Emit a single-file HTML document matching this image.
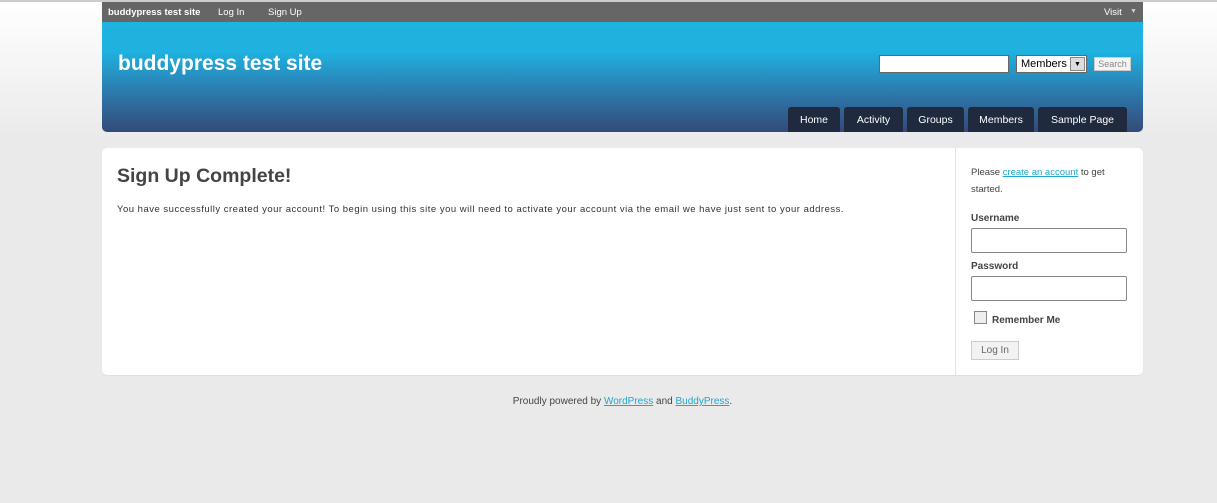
<!DOCTYPE html>
<html><head><style>
*{margin:0;padding:0;box-sizing:border-box}
body{width:1217px;height:503px;overflow:hidden;font-family:"Liberation Sans",Arial,sans-serif;background:linear-gradient(#fff 0,#eaeaea 140px,#eaeaea 503px);position:relative}
.topline{position:absolute;left:0;top:0;width:1217px;height:2px;background:#ccc}
#bar{position:absolute;left:102px;top:2px;width:1041px;height:20px;background:#666;color:#fff;font-size:9.5px}
#bar span{position:absolute;top:5px}
#hdr{position:absolute;left:102px;top:22px;width:1041px;height:110px;background:linear-gradient(#1fb3e0 0,#1fb1df 30px,#2c7aad 70px,#344a78 110px);border-radius:0 0 5px 5px}
#hdr h1{position:absolute;left:16px;top:30px;font-size:21px;color:#fff;font-weight:bold}
.inp{position:absolute;background:#fff;border:1px solid #666}
.nav{position:absolute;top:85px;height:25px;background:#1f2a3e;color:#fff;font-size:10.5px;text-align:center;line-height:26px;border-radius:3px 3px 0 0}
#main{position:absolute;left:102px;top:148px;width:1041px;height:227px;background:#fff;border-radius:5px;box-shadow:0 1px 1px #ddd}
#main h2{position:absolute;left:15px;top:17px;font-size:19.5px;color:#444}
#main p{position:absolute;left:15px;top:56px;font-size:9.5px;letter-spacing:0.5px;color:#333;white-space:nowrap}
#side{position:absolute;left:853px;top:0;width:1px;height:227px;background:#e2e2e2}
.s{position:absolute;font-size:9.5px;color:#444}
.b{font-weight:bold;font-size:10px}
a{color:#1fa7cf}
.box{position:absolute;left:869px;width:156px;height:25px;border:1px solid #888;border-radius:2px}
#foot{position:absolute;left:0;width:1245px;text-align:center;top:396px;font-size:10px;color:#444}
</style></head><body>
<div class="topline"></div>
<div id="bar"><span style="left:6px;font-weight:bold">buddypress test site</span><span style="left:116px">Log In</span><span style="left:166px">Sign Up</span><span style="left:1002px">Visit</span><span style="left:1028px;font-size:7px;top:6px;color:#ccc">▼</span></div>
<div id="hdr"><h1>buddypress test site</h1>
<div class="inp" style="left:777px;top:33px;width:130px;height:18px"></div>
<div class="inp" style="left:914px;top:33px;width:71px;height:18px;font-size:11px;padding:2px 4px">Members<span style="position:absolute;right:1px;top:1px;width:15px;height:14px;background:#ddd;border:1px solid #888;font-size:7px;text-align:center;line-height:13px">▼</span></div>
<div class="inp" style="left:992px;top:35px;width:37px;height:14px;border-color:#ccc;font-size:9px;color:#888;text-align:center;line-height:12px;background:#f4f4f4">Search</div>
<div class="nav" style="left:686px;width:52px">Home</div>
<div class="nav" style="left:742px;width:59px">Activity</div>
<div class="nav" style="left:805px;width:57px">Groups</div>
<div class="nav" style="left:866px;width:66px">Members</div>
<div class="nav" style="left:936px;width:89px">Sample Page</div>
</div>
<div id="main"><h2>Sign Up Complete!</h2>
<p>You have successfully created your account! To begin using this site you will need to activate your account via the email we have just sent to your address.</p>
<div id="side"></div>
<div class="s" style="left:869px;top:16px;width:160px;line-height:17px">Please <a href="#">create an account</a> to get started.</div>
<div class="s b" style="left:869px;top:65px">Username</div>
<div class="box" style="top:80px"></div>
<div class="s b" style="left:869px;top:113px">Password</div>
<div class="box" style="top:128px"></div>
<div style="position:absolute;left:872px;top:163px;width:13px;height:13px;border:1px solid #888;background:#eee"></div>
<div class="s b" style="left:890px;top:167px">Remember Me</div>
<div style="position:absolute;left:869px;top:193px;width:48px;height:19px;border:1px solid #ccc;background:#f2f2f2;font-size:10px;color:#666;text-align:center;line-height:17px">Log In</div>
</div>
<div id="foot">Proudly powered by <a href="#">WordPress</a> and <a href="#">BuddyPress</a>.</div>
</body></html>
